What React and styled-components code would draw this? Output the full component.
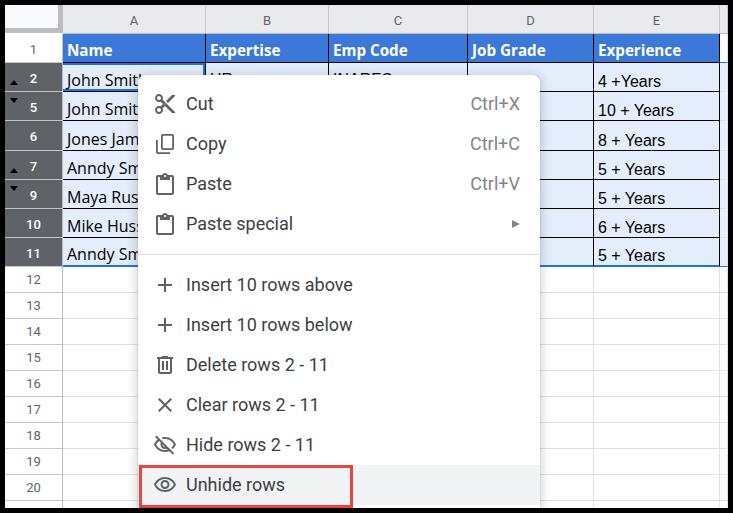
import React from 'react';
import styled, { createGlobalStyle } from 'styled-components';

const GlobalStyle = createGlobalStyle`
  html, body {
    margin: 0;
    padding: 0;
    background: #000;
    overflow: hidden;
  }
`;

const columns = [
  { letter: 'A', width: 143, title: 'Name' },
  { letter: 'B', width: 123, title: 'Expertise' },
  { letter: 'C', width: 139, title: 'Emp Code' },
  { letter: 'D', width: 126, title: 'Job Grade' },
  { letter: 'E', width: 126, title: 'Experience' },
];
const gridCols = '58px ' + columns.map((c) => c.width + 'px').join(' ') + ' 8px';

const rows = [
  { n: 2, name: 'John Smith', skill: 'HR', code: 'INARFC', years: '4 +Years', h: 29, up: true },
  { n: 5, name: 'John Smith', skill: '', code: '', years: '10 + Years', h: 29, down: true },
  { n: 6, name: 'Jones James', skill: '', code: '', years: '8 + Years', h: 30 },
  { n: 7, name: 'Anndy Smith', skill: '', code: '', years: '5 + Years', h: 29, up: true },
  { n: 9, name: 'Maya Russel', skill: '', code: '', years: '5 + Years', h: 29, down: true },
  { n: 10, name: 'Mike Hussey', skill: '', code: '', years: '6 + Years', h: 29 },
  { n: 11, name: 'Anndy Smith', skill: '', code: '', years: '5 + Years', h: 29 },
];
const emptyRows = [12, 13, 14, 15, 16, 17, 18, 19, 20];

const Frame = styled.div`
  position: relative;
  width: 723px;
  height: 503px;
  margin: 5px;
  background: #fff;
  overflow: hidden;
`;

const Sheet = styled.div`
  display: grid;
  grid-template-columns: ${gridCols};
`;

const Corner = styled.div`
  height: 23px;
  width: 53px;
  background: #f8f9fa;
  border-right: 5px solid #bdbdbd;
  border-bottom: 5px solid #bdbdbd;
  margin-bottom: 1px;
`;

const ColHead = styled.div`
  height: 29px;
  box-sizing: border-box;
  background: #e8eaed;
  border-right: 1px solid #c4c7c5;
  border-bottom: 1px solid #bdbdbd;
  padding-top: 2px;
  display: flex;
  align-items: center;
  justify-content: center;
  font: 13px Roboto, sans-serif;
  color: #5f6368;
`;

const RowHead = styled.div`
  position: relative;
  height: ${(p) => p.$h}px;
  box-sizing: border-box;
  padding-top: ${(p) => (p.$low ? 2 : 0)}px;
  display: flex;
  align-items: center;
  justify-content: center;
  font: ${(p) => (p.$selected ? 500 : 400)} 13px Roboto, sans-serif;
  background: ${(p) => (p.$selected ? '#5f6368' : '#fff')};
  color: ${(p) => (p.$selected ? '#fff' : '#5f6368')};
  border-right: 1px solid #bdbdbd;
  border-bottom: 1px solid #c4c7c5;
`;

const Arrow = styled.span`
  position: absolute;
  left: 5px;
  ${(p) => (p.$down ? 'top: 6px;' : 'bottom: 6px;')}
  width: 0;
  height: 0;
  border-left: 4px solid transparent;
  border-right: 4px solid transparent;
  ${(p) => (p.$down ? 'border-top: 5px solid #000;' : 'border-bottom: 5px solid #000;')}
`;

const HeadCell = styled.div`
  height: 29px;
  box-sizing: border-box;
  background: #3c78d8;
  color: #fff;
  font: 700 15.2px "Open Sans", sans-serif;
  display: flex;
  align-items: center;
  padding: 3px 0 0 4px;
  border-right: 1px solid #000;
  border-bottom: 1px solid #000;
  white-space: nowrap;
`;

const BodyCell = styled.div`
  height: ${(p) => p.$h}px;
  box-sizing: border-box;
  background: #e3edfb;
  color: #000;
  font: ${(p) => (p.$arial ? '16px "Liberation Sans"' : '16px "Open Sans"')}, sans-serif;
  display: flex;
  align-items: flex-end;
  padding: 0 0 ${(p) => (p.$lift ? 2 : 0)}px 4px;
  border-right: 1px solid #000;
  border-bottom: ${(p) => (p.$last ? '2px solid #1a73e8' : '1px solid #000')};
  box-shadow: ${(p) =>
    p.$active
      ? 'inset -2px 0 0 #1a73e8, inset 0 2px 0 #1a73e8, inset 0 -2px 0 #1a73e8'
      : 'none'};
  white-space: nowrap;
  overflow: hidden;
`;

const FreeCell = styled.div`
  height: ${(p) => p.$h}px;
  box-sizing: border-box;
  background: ${(p) => (p.$tint ? '#e8f0fd' : '#fff')};
  border-right: 1px solid #e1e1e1;
  border-bottom: 1px solid ${(p) => (p.$edge ? '#1a73e8' : '#e1e1e1')};
`;

const Menu = styled.div`
  position: absolute;
  left: 133px;
  top: 70px;
  width: 402px;
  height: 440px;
  background: #fff;
  border-radius: 8px 8px 0 0;
  box-shadow: 0 2px 10px 3px rgba(60, 64, 67, 0.18), 0 1px 2px rgba(60, 64, 67, 0.25);
  padding-top: 9px;
  box-sizing: border-box;
`;

const Item = styled.div`
  height: 40px;
  display: flex;
  align-items: center;
  padding-left: 15px;
  background: ${(p) => (p.$active ? '#f1f3f4' : 'transparent')};
  font: 18px Roboto, sans-serif;
  color: #3c4043;
`;

const IconSlot = styled.span`
  width: 33px;
  display: flex;
  align-items: center;
  color: #5f6368;
  svg {
    display: block;
  }
`;

const Label = styled.span`
  flex: 1;
  padding-bottom: 2px;
  white-space: nowrap;
`;

const Shortcut = styled.span`
  margin-right: 20px;
  padding-bottom: 2px;
  color: #80868b;
`;

const SubArrow = styled.span`
  margin-right: 20px;
  width: 0;
  height: 0;
  border-top: 4px solid transparent;
  border-bottom: 4px solid transparent;
  border-left: 8px solid #80868b;
`;

const Divider = styled.div`
  height: 1px;
  background: #dadce0;
  margin: 10px 0 10px;
`;

const Callout = styled.div`
  position: absolute;
  left: 134px;
  top: 460px;
  width: 214px;
  height: 43px;
  box-sizing: border-box;
  border: 3px solid #e8453c;
  pointer-events: none;
`;

const Ico = ({ d }) => (
  <svg width={24} height={24} viewBox="0 0 24 24" fill="currentColor">
    <path d={d} />
  </svg>
);

const CutIcon = () => (
  <Ico d="M9.64 7.64c.23-.5.36-1.05.36-1.64 0-2.21-1.79-4-4-4S2 3.79 2 6s1.79 4 4 4c.59 0 1.14-.13 1.64-.36L10 12l-2.36 2.36C7.14 14.13 6.59 14 6 14c-2.21 0-4 1.79-4 4s1.79 4 4 4 4-1.79 4-4c0-.59-.13-1.14-.36-1.64L12 14l7 7h3v-1L9.64 7.64zM6 8c-1.1 0-2-.89-2-2s.9-2 2-2 2 .89 2 2-.9 2-2 2zm0 12c-1.1 0-2-.89-2-2s.9-2 2-2 2 .89 2 2-.9 2-2 2zm6-7.5c-.28 0-.5-.22-.5-.5s.22-.5.5-.5.5.22.5.5-.22.5-.5.5zM19 3l-6 6 2 2 7-7V3h-3z" />
);
const CopyIcon = () => (
  <svg width={24} height={24} viewBox="0 0 24 24" fill="none" stroke="currentColor" strokeWidth="1.8">
    <rect x="8.9" y="2.9" width="11.2" height="14.2" rx="1" />
    <path d="M3.9 8v12.1c0 .6.4 1 1 1H17" />
  </svg>
);
const PasteIcon = () => (
  <Ico d="M19 3h-4.18C14.4 1.84 13.3 1 12 1s-2.4.84-2.82 2H5c-1.1 0-2 .9-2 2v16c0 1.1.9 2 2 2h14c1.1 0 2-.9 2-2V5c0-1.1-.9-2-2-2zm-7 0c.55 0 1 .45 1 1s-.45 1-1 1-1-.45-1-1 .45-1 1-1zm7 18H5V5h2v3h10V5h2v16z" />
);
const PlusIcon = () => <Ico d="M19 13h-6v6h-2v-6H5v-2h6V5h2v6h6v2z" />;
const TrashIcon = () => (
  <Ico d="M15 4V3H9v1H4v2h1v13c0 1.1.9 2 2 2h10c1.1 0 2-.9 2-2V6h1V4h-5zm2 15H7V6h10v13zM9 8h2v9H9V8zm4 0h2v9h-2V8z" />
);
const CloseIcon = () => (
  <Ico d="M19 6.41 17.59 5 12 10.59 6.41 5 5 6.41 10.59 12 5 17.59 6.41 19 12 13.41 17.59 19 19 17.59 13.41 12z" />
);
const EyeOffIcon = () => (
  <Ico d="M12 6c3.79 0 7.17 2.13 8.82 5.5-.59 1.22-1.42 2.27-2.41 3.12l1.41 1.41c1.39-1.23 2.49-2.77 3.18-4.53C21.27 7.11 17 4 12 4c-1.27 0-2.49.2-3.64.57l1.65 1.65C10.66 6.09 11.32 6 12 6zM2.01 3.87l2.68 2.68C3.06 7.83 1.77 9.53 1 11.5 2.73 15.89 7 19 12 19c1.52 0 2.98-.29 4.32-.82l3.42 3.42 1.41-1.41L3.42 2.45 2.01 3.87zm7.5 7.5 2.61 2.61c-.04.01-.08.02-.12.02-1.38 0-2.5-1.12-2.5-2.5 0-.05.01-.08.01-.13zm-3.4-3.4 1.75 1.75c-.23.55-.36 1.15-.36 1.78 0 2.48 2.02 4.5 4.5 4.5.63 0 1.23-.13 1.77-.36l.98.98c-.88.24-1.8.38-2.75.38-3.79 0-7.17-2.13-8.82-5.5.7-1.43 1.72-2.61 2.93-3.53z" />
);
const EyeIcon = () => (
  <Ico d="M12 6c3.79 0 7.17 2.13 8.82 5.5C19.17 14.87 15.79 17 12 17s-7.17-2.13-8.82-5.5C4.83 8.13 8.21 6 12 6m0-2C7 4 2.73 7.11 1 11.5 2.73 15.89 7 19 12 19s9.27-3.11 11-7.5C21.27 7.11 17 4 12 4zm0 5c1.38 0 2.5 1.12 2.5 2.5S13.38 14 12 14s-2.5-1.12-2.5-2.5S10.62 9 12 9m0-2c-2.48 0-4.5 2.02-4.5 4.5S9.52 16 12 16s4.5-2.02 4.5-4.5S14.48 7 12 7z" />
);

const topItems = [
  { icon: <CutIcon />, label: 'Cut', key: 'Ctrl+X' },
  { icon: <CopyIcon />, label: 'Copy', key: 'Ctrl+C' },
  { icon: <PasteIcon />, label: 'Paste', key: 'Ctrl+V' },
  { icon: <PasteIcon />, label: 'Paste special', sub: true },
];
const bottomItems = [
  { icon: <PlusIcon />, label: 'Insert 10 rows above' },
  { icon: <PlusIcon />, label: 'Insert 10 rows below' },
  { icon: <TrashIcon />, label: 'Delete rows 2 - 11' },
  { icon: <CloseIcon />, label: 'Clear rows 2 - 11' },
  { icon: <EyeOffIcon />, label: 'Hide rows 2 - 11' },
  { icon: <EyeIcon />, label: 'Unhide rows', active: true },
];

function MenuRow({ item }) {
  return (
    <Item $active={item.active}>
      <IconSlot>{item.icon}</IconSlot>
      <Label>{item.label}</Label>
      {item.key && <Shortcut>{item.key}</Shortcut>}
      {item.sub && <SubArrow />}
    </Item>
  );
}

export default function App() {
  return (
    <Frame>
      <GlobalStyle />
      <Sheet>
        <Corner />
        {columns.map((c) => (
          <ColHead key={c.letter}>{c.letter}</ColHead>
        ))}
        <ColHead />

        <RowHead $h={29} $low>1</RowHead>
        {columns.map((c) => (
          <HeadCell key={c.letter}>{c.title}</HeadCell>
        ))}
        <FreeCell $h={29} $edge />

        {rows.map((r, i) => {
          const last = i === rows.length - 1;
          return (
            <React.Fragment key={r.n}>
              <RowHead $h={r.h} $selected $low>
                {r.up && <Arrow />}
                {r.down && <Arrow $down />}
                {r.n}
              </RowHead>
              <BodyCell $h={r.h} $last={last} $active={i === 0}>{r.name}</BodyCell>
              <BodyCell $h={r.h} $last={last} $arial $lift>{r.skill}</BodyCell>
              <BodyCell $h={r.h} $last={last} $arial $lift>{r.code}</BodyCell>
              <BodyCell $h={r.h} $last={last} />
              <BodyCell $h={r.h} $last={last} $arial>{r.years}</BodyCell>
              <FreeCell $h={r.h} $tint $edge={last} />
            </React.Fragment>
          );
        })}

        {emptyRows.map((n) => (
          <React.Fragment key={n}>
            <RowHead $h={26}>{n}</RowHead>
            {columns.map((c) => (
              <FreeCell key={c.letter} $h={26} />
            ))}
            <FreeCell $h={26} />
          </React.Fragment>
        ))}

        <RowHead $h={26} />
        {columns.map((c) => (
          <FreeCell key={c.letter} $h={26} />
        ))}
        <FreeCell $h={26} />
      </Sheet>

      <Menu>
        {topItems.map((item) => (
          <MenuRow key={item.label} item={item} />
        ))}
        <Divider />
        {bottomItems.map((item) => (
          <MenuRow key={item.label} item={item} />
        ))}
      </Menu>
      <Callout />
    </Frame>
  );
}
